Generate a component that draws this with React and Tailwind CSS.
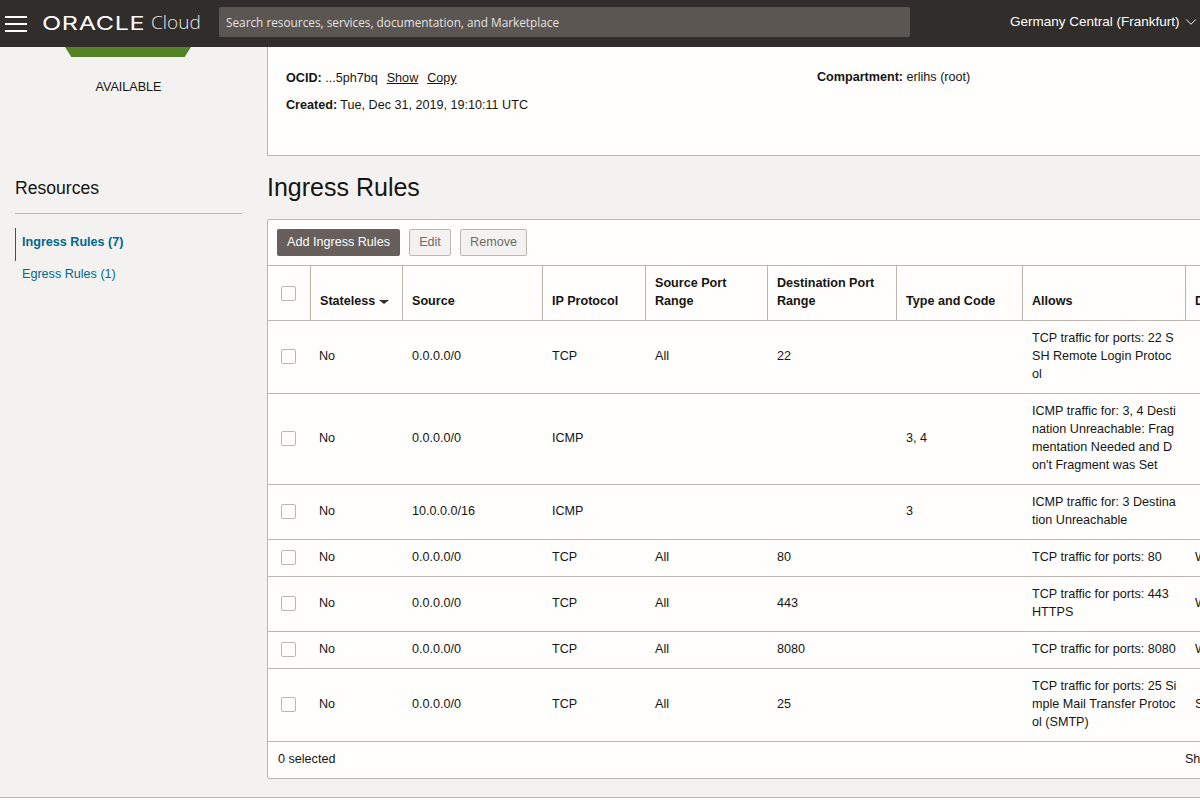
import { ChevronDown } from 'lucide-react';

const rows = [
  { source: '0.0.0.0/0', protocol: 'TCP', srcPort: 'All', dstPort: '22', type: '', allows: 'TCP traffic for ports: 22 SSH Remote Login Protocol', desc: '' },
  { source: '0.0.0.0/0', protocol: 'ICMP', srcPort: '', dstPort: '', type: '3, 4', allows: "ICMP traffic for: 3, 4 Destination Unreachable: Fragmentation Needed and Don't Fragment was Set", desc: '' },
  { source: '10.0.0.0/16', protocol: 'ICMP', srcPort: '', dstPort: '', type: '3', allows: 'ICMP traffic for: 3 Destination Unreachable', desc: '' },
  { source: '0.0.0.0/0', protocol: 'TCP', srcPort: 'All', dstPort: '80', type: '', allows: 'TCP traffic for ports: 80', desc: 'Web' },
  { source: '0.0.0.0/0', protocol: 'TCP', srcPort: 'All', dstPort: '443', type: '', allows: 'TCP traffic for ports: 443 HTTPS', desc: 'Web' },
  { source: '0.0.0.0/0', protocol: 'TCP', srcPort: 'All', dstPort: '8080', type: '', allows: 'TCP traffic for ports: 8080', desc: 'Web' },
  { source: '0.0.0.0/0', protocol: 'TCP', srcPort: 'All', dstPort: '25', type: '', allows: 'TCP traffic for ports: 25 Simple Mail Transfer Protocol (SMTP)', desc: 'SMTP' },
];

function Checkbox() {
  return <span className="block w-[15px] h-[15px] ml-[13px] bg-[#fffefd] border border-[#bcb6b1] rounded-[2px]" />;
}

function Th({ children, last }) {
  return (
    <th className={`align-bottom text-left font-bold pl-[9px] pr-[9px] pb-[10px] pt-[8px] border-b border-[#bcb6b1] ${last ? '' : 'border-r'}`}>
      {children}
    </th>
  );
}

function Td({ children, className = 'pl-[9px]' }) {
  return <td className={`align-middle pr-[9px] pt-[8px] pb-[10px] border-b border-[#bcb6b1] ${className}`}>{children}</td>;
}

export default function App() {
  return (
    <div className="w-[1200px] h-[800px] overflow-hidden flex flex-col bg-[#f3f2f1] text-[12.6px] leading-[18px] text-[#161513] font-['Liberation_Sans',Arial,sans-serif]">
      {/* Top bar */}
      <header className="h-[47px] shrink-0 bg-[#312d2a] flex items-center pb-[3px] text-white">
        <svg className="ml-[5px] mt-[3px] shrink-0" width="22" height="16" viewBox="0 0 22 16" fill="none" stroke="#fff" strokeWidth="2">
          <path d="M0 1h22M0 8h22M0 15h22" />
        </svg>
        <span className="ml-[15px] w-[103px] mt-[3px] shrink-0 text-[19px] leading-none font-['Inter',sans-serif] font-normal tracking-[0.5px] origin-left scale-x-[1.32] whitespace-nowrap">ORACLE</span>
        <span className="ml-[6px] w-[65px] shrink-0 text-[19px] leading-none font-['Open_Sans',sans-serif] font-light text-[#e8e6e4] whitespace-nowrap">Cloud</span>
        <div className="ml-[3px] w-[691px] h-[30px] shrink-0 bg-[#5c5653] rounded-[2px] flex items-center pl-[7px] text-[#e4e2e0] font-['Open_Sans',sans-serif] text-[11.8px] whitespace-nowrap">
          Search resources, services, documentation, and Marketplace
        </div>
        <span className="ml-[100px] text-[13.5px] whitespace-nowrap">Germany Central (Frankfurt)</span>
        <ChevronDown className="ml-[2px] shrink-0 text-white" size={18} strokeWidth={1.25} />
      </header>

      <div className="flex-1 flex min-h-0">
        {/* Left column */}
        <aside className="w-[267px] shrink-0 pl-[15px]">
          <div className="ml-[50px] w-[126px] h-[10px] bg-[#548227] [clip-path:polygon(0_0,100%_0,95%_100%,5%_100%)]" />
          <p className="mt-[21px] ml-[-15px] w-[257px] text-center">AVAILABLE</p>
          <h2 className="mt-[80px] w-[227px] pb-[13px] text-[17.6px] leading-[24px] border-b border-[#bcb6b1]">Resources</h2>
          <nav className="mt-[14px]">
            <a className="flex items-center h-[33px] pb-[6px] pl-[6px] border-l border-[#00688c] font-bold text-[#00688c]">Ingress Rules (7)</a>
            <a className="flex items-center h-[32px] pb-[7px] pl-[7px] text-[#00688c]">Egress Rules (1)</a>
          </nav>
        </aside>

        {/* Main column */}
        <main className="w-[1022px] shrink-0">
          <section className="h-[109px] bg-[#fffefd] border-l border-b border-[#bcb6b1] pl-[18px] pt-[22px] flex">
            <div className="w-[531px]">
              <p>
                <b>OCID:</b> ...5ph7bq
                <a className="ml-[9px] underline">Show</a>
                <a className="ml-[9px] underline">Copy</a>
              </p>
              <p className="mt-[9px]"><b>Created:</b> Tue, Dec 31, 2019, 19:10:11 UTC</p>
            </div>
            <p className="mt-[-1px]"><b>Compartment:</b> erlihs (root)</p>
          </section>

          <h1 className="mt-[15px] text-[25px] leading-[32px]">Ingress Rules</h1>

          <div className="mt-[16px] bg-[#fffefd] border border-[#bcb6b1] rounded-[2px]">
            <div className="h-[45px] pl-[9px] pt-[9px] flex gap-[9px]">
              <button className="h-[27px] w-[123px] pb-[2px] bg-[#665f5b] text-[#fffefd] rounded-[2px]">Add Ingress Rules</button>
              <button className="h-[27px] w-[42px] pb-[2px] bg-[#f3f2f1] text-[#706b67] border border-[#bcb6b1] rounded-[2px]">Edit</button>
              <button className="h-[27px] w-[67px] pb-[2px] bg-[#f3f2f1] text-[#706b67] border border-[#bcb6b1] rounded-[2px]">Remove</button>
            </div>
            <table className="w-full table-fixed border-separate border-spacing-0 border-t border-[#bcb6b1]">
              <colgroup>
                <col className="w-[43px]" />
                <col className="w-[92px]" />
                <col className="w-[140px]" />
                <col className="w-[103px]" />
                <col className="w-[122px]" />
                <col className="w-[129px]" />
                <col className="w-[126px]" />
                <col className="w-[163px]" />
                <col />
              </colgroup>
              <thead>
                <tr>
                  <th className="align-middle pr-[9px] border-b border-r border-[#bcb6b1]"><Checkbox /></th>
                  <Th>
                    <span className="flex items-center whitespace-nowrap">
                      Stateless
                      <span className="ml-[4px] mt-[2px] w-0 h-0 border-x-[5px] border-x-transparent border-t-[4px] border-t-[#312d2a]" />
                    </span>
                  </Th>
                  <Th>Source</Th>
                  <Th>IP Protocol</Th>
                  <Th>Source Port Range</Th>
                  <Th>Destination Port Range</Th>
                  <Th>Type and Code</Th>
                  <Th>Allows</Th>
                  <Th last>Description</Th>
                </tr>
              </thead>
              <tbody>
                {rows.map((r, i) => (
                  <tr key={i}>
                    <Td className="pl-0"><span className="block mt-[1px]"><Checkbox /></span></Td>
                    <Td className="pl-[8px]">No</Td>
                    <Td>{r.source}</Td>
                    <Td>{r.protocol}</Td>
                    <Td>{r.srcPort}</Td>
                    <Td>{r.dstPort}</Td>
                    <Td>{r.type}</Td>
                    <Td className="pl-[9px] break-all">{r.allows}</Td>
                    <Td>{r.desc}</Td>
                  </tr>
                ))}
              </tbody>
            </table>
            <div className="h-[36px] pl-[10px] pr-[10px] pb-[2px] flex items-center justify-between">
              <span>0 selected</span>
              <span>Showing 7 Items</span>
            </div>
          </div>
        </main>
      </div>

      <footer className="h-[3px] shrink-0 bg-[#fffefd] border-t border-[#bcb6b1]" />
    </div>
  );
}
